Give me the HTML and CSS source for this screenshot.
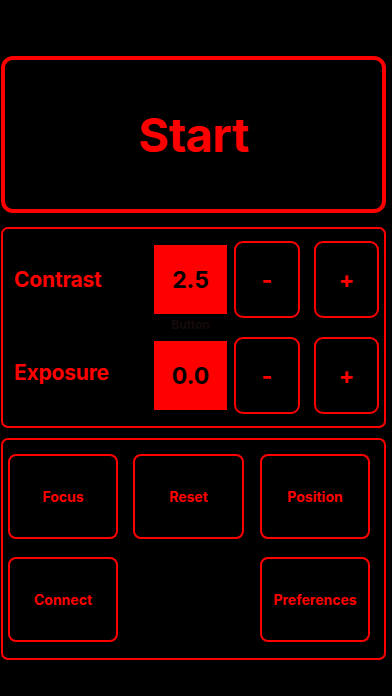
FILE: index.html
```html
<!DOCTYPE html>
<html>
<head>
<meta charset="utf-8">
<link rel="stylesheet" href="styles.css">
</head>
<body>
<div class="app">
  <button class="start">Start</button>
  <section class="panel adjust">
    <div class="row">
      <span class="label">Contrast</span>
      <span class="value">2.5</span>
      <button class="step minus">-</button>
      <button class="step plus">+</button>
    </div>
    <div class="caption"><span>Button</span></div>
    <div class="row">
      <span class="label raised">Exposure</span>
      <span class="value">0.0</span>
      <button class="step minus">-</button>
      <button class="step plus">+</button>
    </div>
  </section>
  <section class="panel actions">
    <button class="act">Focus</button>
    <button class="act">Reset</button>
    <button class="act">Position</button>
    <button class="act">Connect</button>
    <span class="empty"></span>
    <button class="act">Preferences</button>
  </section>
</div>
</body>
</html>
```
FILE: styles.css
```css
html, body {
  margin: 0;
  padding: 0;
  background: #000;
  height: 100%;
}
body {
  font-family: Inter, "Noto Sans", "Liberation Sans", sans-serif;
  color: #ff0000;
}
button {
  font-family: inherit;
  background: #000;
  color: #ff0000;
  padding: 0;
  cursor: pointer;
}
.app {
  display: flex;
  flex-direction: column;
  padding: 56px 6px 0 1px;
}
.start {
  height: 157px;
  border: 4.5px solid #ff0000;
  border-radius: 12px;
  font-size: 47px;
  font-weight: 700;
  letter-spacing: -0.5px;
  padding-top: 0;
}
.panel {
  border: 2px solid #ff0000;
  border-radius: 7px;
  box-sizing: border-box;
}
.adjust {
  margin-top: 14px;
  height: 201px;
  padding: 12px 5px 0 11px;
  display: flex;
  flex-direction: column;
}
.row {
  display: flex;
  align-items: center;
  height: 77px;
}
.label {
  flex: 1;
  font-size: 21px;
  font-weight: 700;
  letter-spacing: -0.2px;
}
.label.raised {
  margin-top: -6px;
}
.value {
  width: 73px;
  height: 69px;
  background: #ff0000;
  color: #000;
  display: flex;
  align-items: center;
  justify-content: center;
  font-size: 23px;
  font-weight: 700;
}
.step {
  height: 77px;
  border: 2px solid #ff0000;
  border-radius: 9px;
  font-size: 23px;
  font-weight: 700;
  box-sizing: border-box;
}
.minus {
  width: 66px;
  margin-left: 7px;
}
.plus {
  width: 65px;
  margin-left: 14px;
}
.caption {
  height: 19px;
  display: flex;
  justify-content: flex-end;
  padding-right: 152px;
}
.caption span {
  width: 73px;
  text-align: center;
  font-size: 12px;
  font-weight: 700;
  line-height: 14px;
  color: #150b0b;
}
.actions {
  margin-top: 10px;
  height: 222px;
  padding: 14px 0 0 5px;
  display: grid;
  grid-template-columns: 110px 111px 111px;
  grid-template-rows: 85px 85px;
  column-gap: 15px;
  row-gap: 18px;
}
.actions .act:nth-child(3),
.actions .act:nth-child(6) {
  margin-left: 1px;
}
.act {
  border: 2px solid #ff0000;
  border-radius: 8px;
  font-size: 14px;
  font-weight: 700;
  box-sizing: border-box;
}
```
